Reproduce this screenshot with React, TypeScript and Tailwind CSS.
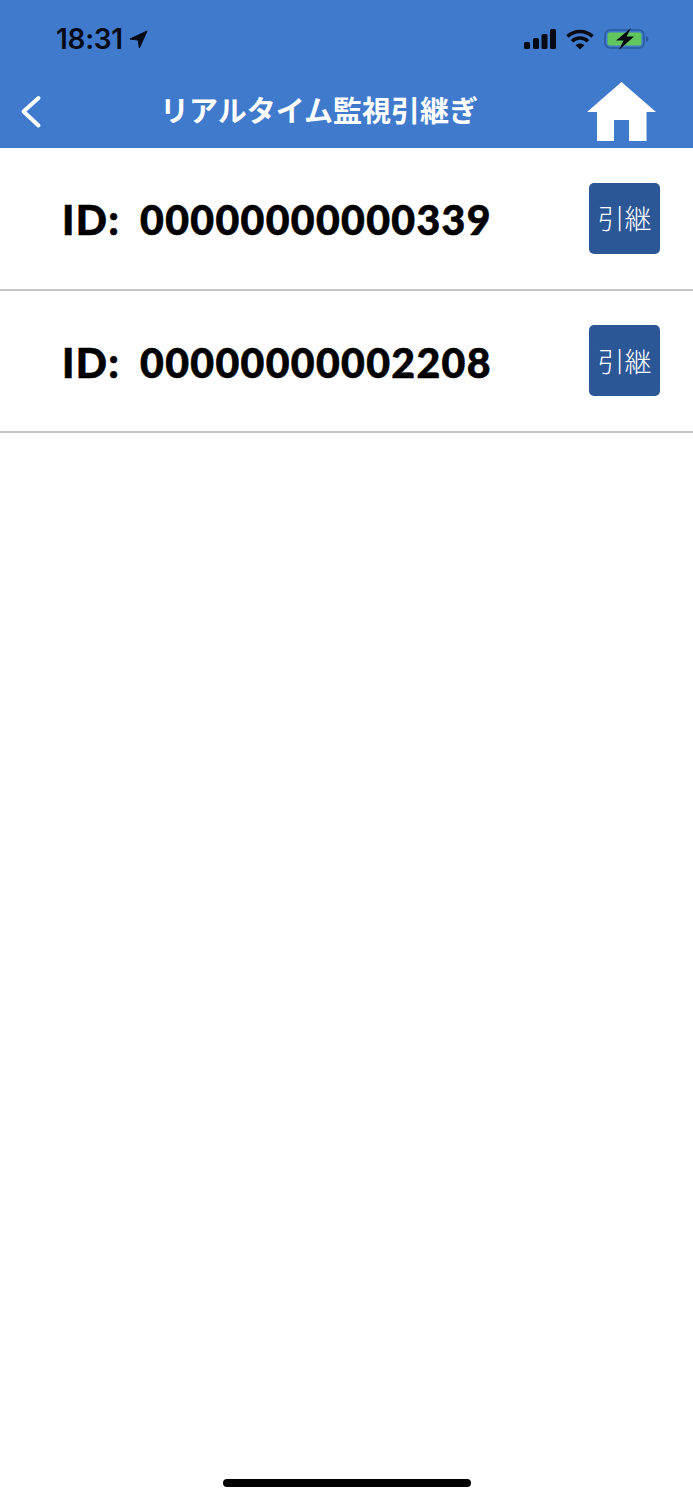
const rows = ["00000000000339", "00000000002208"];

function StatusBar() {
  return (
    <div className="flex h-[68px] items-start justify-between pt-[25px] pl-[56px] pr-[44px]">
      <div className="flex items-center gap-[6px]">
        <span className="font-['Inter',sans-serif] text-[28px] leading-[28px] font-semibold tracking-[-0.3px] text-[#050a14]">18:31</span>
        <svg width="19" height="19" viewBox="0 0 20 20">
          <path d="M19 1 1 9.5 9.6 10.6 11 19Z" fill="#050a14" stroke="#050a14" strokeWidth="1" strokeLinejoin="round" />
        </svg>
      </div>
      <div className="flex items-center gap-[10px] pt-[3px]">
        <svg width="32" height="20" viewBox="0 0 32 20" fill="#050a14">
          <rect x="0" y="13" width="6" height="7" rx="1.5" />
          <rect x="9" y="9" width="6" height="11" rx="1.5" />
          <rect x="17.5" y="5" width="6" height="15" rx="1.5" />
          <rect x="26" y="0" width="6" height="20" rx="1.5" />
        </svg>
        <svg width="28" height="21" viewBox="0 0 28 21" fill="none" stroke="#050a14" strokeWidth="3.6">
          <path d="M1.5 7.5C8.5 .8 19.5 .8 26.5 7.5" />
          <path d="M6 12.2C10.5 8 17.5 8 22 12.2" />
          <path d="M14 20.5 9.6 16.2C12 14 16 14 18.4 16.2Z" fill="#050a14" stroke="none" />
        </svg>
        <svg width="45" height="22" viewBox="0 0 45 22">
          <rect x="1" y="2" width="39" height="18" rx="5" fill="none" stroke="#2a5a9c" strokeWidth="1.5" />
          <rect x="3.5" y="4.5" width="34" height="13" rx="2.5" fill="#62c65f" />
          <path d="M42 8c1.6.4 2.4 1.5 2.4 3s-.8 2.6-2.4 3Z" fill="#2a5a9c" />
          <path d="M27 0 12 12.5h7.5L15 22 30 8.5h-7.5Z" fill="#050a14" />
        </svg>
      </div>
    </div>
  );
}

function NavBar() {
  return (
    <div className="flex h-[80px] items-start justify-between pl-[20px] pr-[37px]">
      <svg width="24" height="34" viewBox="0 0 24 34" fill="none" stroke="white" strokeWidth="4" strokeLinecap="round" strokeLinejoin="round" className="mt-[27px]">
        <path d="M18.5 3 3.5 16.5 18.5 30.5" />
      </svg>
      <h1 className="mt-[20px] ml-[7px] text-[29px] leading-[42px] font-bold text-white">リアルタイム監視引継ぎ</h1>
      <svg width="69" height="60" viewBox="0 0 69 60" fill="white" className="mt-[14px]">
        <path d="M34.5 0 69 30H59.5V59H42V38H27V59H10V30H0Z" />
      </svg>
    </div>
  );
}

function Row({ id }: { id: string }) {
  return (
    <div className="flex h-[142.5px] items-center justify-between border-b-2 border-[#c4c4c4] pl-[62px] pr-[33px]">
      <div className="mt-[4px] flex font-['Lato',sans-serif] text-[41px] leading-[48px] font-black tracking-[1.35px] text-black [-webkit-text-stroke:0.6px_black]">
        <span className="w-[78px]">ID:</span>
        <span>{id}</span>
      </div>
      <button className="flex h-[71px] w-[71px] items-center justify-center rounded-[5px] bg-[#2b5797] text-[27px] font-light text-white">
        引継
      </button>
    </div>
  );
}

export default function App() {
  return (
    <div className="flex h-[1500px] flex-col bg-white font-['Noto_Sans_CJK_JP',sans-serif]">
      <header className="h-[148px] bg-[#407ACC]">
        <StatusBar />
        <NavBar />
      </header>
      <main className="flex-1">
        {rows.map((id) => (
          <Row key={id} id={id} />
        ))}
      </main>
      <div className="flex justify-center pb-[13px]">
        <div className="h-[8px] w-[248px] rounded-full bg-black" />
      </div>
    </div>
  );
}
